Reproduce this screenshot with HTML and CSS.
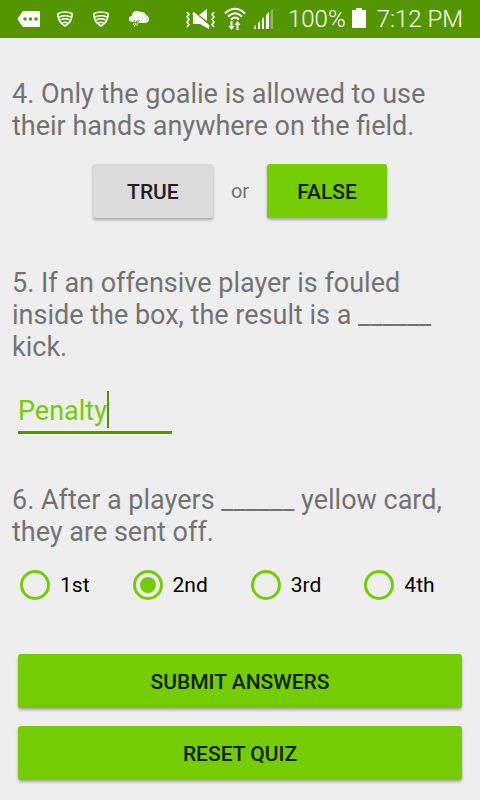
FILE: index.html
```html
<!DOCTYPE html>
<html lang="en">
<head>
<meta charset="utf-8">
<meta name="viewport" content="width=device-width, initial-scale=1">
<title>Soccer Quiz</title>
<link rel="stylesheet" href="styles.css">
</head>
<body>
<header class="status">
  <div class="notices">
    <svg class="tag" width="22" height="16" viewBox="0 0 22 16" aria-hidden="true"><path fill="#fff" d="M5 0h16q1 0 1 1v14q0 1-1 1H5L0 9V7z"/><g fill="#549600"><circle cx="7" cy="8" r="1.8"/><circle cx="12.500" cy="8" r="1.800"/><circle cx="18" cy="8" r="1.800"/></g></svg>
    <svg width="16" height="16" viewBox="0 0 16 16" fill="none" stroke="#fff" stroke-width="1.600" aria-hidden="true"><path d="M1 2.500Q8-.5 15 2.500Q15.500 11 8 15Q.5 11 1 2.500z"/><path d="M2 6Q8 3.500 14 6M3.500 9Q8 6.500 12.500 9M5.500 12Q8 10.500 10.500 12"/></svg>
    <svg width="16" height="16" viewBox="0 0 16 16" fill="none" stroke="#fff" stroke-width="1.600" aria-hidden="true"><path d="M1 2.500Q8-.5 15 2.500Q15.500 11 8 15Q.5 11 1 2.500z"/><path d="M2 6Q8 3.500 14 6M3.500 9Q8 6.500 12.500 9M5.500 12Q8 10.500 10.500 12"/></svg>
    <svg width="20" height="16" viewBox="0 0 20 16" aria-hidden="true"><path fill="#e6e9e2" d="M9 3Q11 0 14 1Q17 2 17 4Q20 5 20 8Q20 12 16 12H9z"/><path fill="#fff" d="M4 11Q0 11 0 8Q0 5 3 5Q3 0 8 0Q12 0 13 4Q17 5 16 9Q15 12 11 12z"/><path fill="none" stroke="#549600" stroke-width="1" d="M6 9L4 12M8.500 9L6 14M10.500 9L8 13"/><path fill="none" stroke="#fff" stroke-width=".8" d="M5 12L4 14M7 12L5 16M9 12L7.500 15"/></svg>
  </div>
  <div class="system">
    <svg width="29" height="20" viewBox="0 0 29 20" aria-hidden="true"><path fill="#fff" d="M13 6L21 0V12zM7 5h3L23 16v4L14 15H7z"/><path stroke="#fff" stroke-width="2.400" d="M7 4L23 18"/><path fill="none" stroke="#fff" stroke-width="1.500" d="M1 3l2 2.500L1 8l2 2.500L1 13l2 2.500L1 18M28 3l-2 2.500L28 8l-2 2.500L28 13l-2 2.500L28 18"/></svg>
    <svg class="wifi" width="22" height="24" viewBox="0 0 22 24" aria-hidden="true"><g fill="none" stroke="#fff" stroke-width="2"><path d="M1 6.500Q11-3 21 6.500M4 9.500Q11 3 18 9.500M7 12.500Q11 8.500 15 12.500"/></g><path fill="#fff" d="M6.500 14h2v5h2L7.500 23l-3-4h2zM12.500 23h2v-5h2l-3-4-3 4h2z"/></svg>
    <svg class="signal" width="19" height="20" viewBox="0 0 19 20" aria-hidden="true"><path fill="#fff" d="M0 18l2-2v4H0zM4 14l2-2v8H4zM8 10l2-2v12H8zM12 6l3-3v17h-3z"/><path fill="#8dba59" d="M16.500 1.500L19 0v20h-2.500z"/></svg>
    <span class="percent">100%</span>
    <svg class="battery" width="14" height="20" viewBox="0 0 14 20" aria-hidden="true"><path fill="#fff" d="M4 0h6v2h4v18H0V2h4z"/></svg>
    <time class="clock">7:12 PM</time>
  </div>
</header>
<main class="quiz">
  <section>
    <p class="question">4. Only the goalie is allowed to use their hands anywhere on the field.</p>
    <div class="choice">
      <button type="button" class="btn btn-plain">TRUE</button>
      <span class="or">or</span>
      <button type="button" class="btn">FALSE</button>
    </div>
  </section>
  <section>
    <label class="question" for="kick">5. If an offensive player is fouled inside the box, the result is a ______ kick.</label>
    <div class="field"><input id="kick" type="text" value="Penalty"><span class="caret"></span></div>
  </section>
  <section>
    <p class="question" id="q6">6. After a players ______ yellow card, they are sent off.</p>
    <div class="options" role="radiogroup" aria-labelledby="q6">
      <label><input type="radio" name="card">1st</label>
      <label><input type="radio" name="card" checked>2nd</label>
      <label><input type="radio" name="card">3rd</label>
      <label><input type="radio" name="card">4th</label>
    </div>
  </section>
  <div class="actions">
    <button type="button" class="btn">SUBMIT ANSWERS</button>
    <button type="button" class="btn">RESET QUIZ</button>
  </div>
</main>
</body>
</html>
```
FILE: styles.css
```css
* { box-sizing: border-box; }

body {
  margin: 0;
  background: #eeeeee;
  color: #737373;
  font-family: Roboto, "Liberation Sans", sans-serif;
}

.status {
  display: flex;
  justify-content: space-between;
  align-items: center;
  height: 38px;
  padding: 0 17px 0 18px;
  background: #549600;
  color: #fff;
  font-size: 24px;
  font-weight: 300;
  line-height: 38px;
  white-space: nowrap;
}

.status svg { display: block; flex: none; }
.notices { display: flex; align-items: center; gap: 20px; }
.notices .tag { margin-right: -3px; }
.system { display: flex; align-items: center; }
.wifi { margin-left: 9px; }
.signal { margin-left: 8px; }
.percent { margin-left: 15px; }
.battery { margin: 0 11px 3px 6px; }

.quiz { padding: 40px 12px 20px; }

.question {
  display: block;
  margin: 0;
  font-size: 27px;
  line-height: 32px;
}

.btn {
  min-width: 120px;
  height: 54px;
  padding: 2px 12px 0;
  border: 0;
  border-radius: 3px;
  background: #76cc02;
  box-shadow: 0 2px 3px rgba(0, 0, 0, 0.3);
  color: #131f02;
  font: 500 21px/52px Roboto, "Liberation Sans", sans-serif;
}

.btn-plain { background: #dbdbdb; color: #212121; }

.choice {
  display: flex;
  justify-content: center;
  align-items: center;
  gap: 18px;
  margin: 22px 0 49px;
}

.or { font-size: 20px; }

.field {
  position: relative;
  width: 154px;
  margin: 22px 6px 50px;
}

.field input {
  display: block;
  width: 100%;
  height: 49px;
  padding: 6px 0 0;
  border: 0;
  border-bottom: 3px solid #549600;
  outline: 0;
  background: none;
  color: #76cc02;
  font: 27px/40px Roboto, "Liberation Sans", sans-serif;
}

.caret {
  position: absolute;
  top: 6px;
  left: 89px;
  width: 2px;
  height: 37px;
  background: #549600;
}

.options {
  display: flex;
  gap: 43px;
  margin: 22px 8px 54px;
  color: #000;
  font-size: 21px;
  line-height: 30px;
}

.options label { display: flex; align-items: center; gap: 10px; }

.options input {
  appearance: none;
  display: grid;
  place-items: center;
  width: 30px;
  height: 30px;
  margin: 0;
  border: 3px solid #76cc02;
  border-radius: 50%;
}

.options input:checked::before {
  content: "";
  width: 16px;
  height: 16px;
  border-radius: 50%;
  background: #76cc02;
}

.actions { display: grid; gap: 18px; margin: 0 6px; }
```
